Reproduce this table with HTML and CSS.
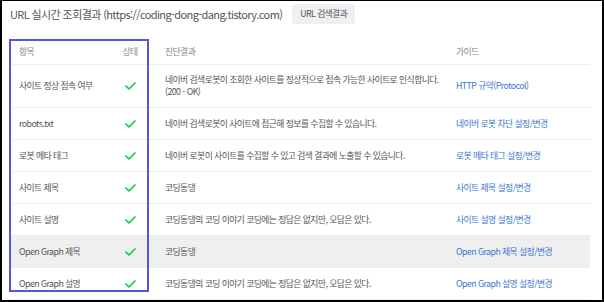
FILE: index.html
```html
<!DOCTYPE html>
<html lang="ko">
<head>
<meta charset="utf-8">
<link rel="stylesheet" href="styles.css">
</head>
<body>
<div class="frame">
  <div class="topbar">
    <span class="title">URL 실시간 조회결과 (https://coding-dong-dang.tistory.com)</span>
    <span class="btn">URL 검색결과</span>
  </div>
  <div class="tablewrap">
    <table class="result">
      <colgroup>
        <col class="c-item"><col class="c-state"><col class="c-desc"><col class="c-guide">
      </colgroup>
      <thead>
        <tr><th class="item">항목</th><th class="state">상태</th><th class="desc">진단결과</th><th class="guide">가이드</th></tr>
      </thead>
      <tbody>
        <tr class="tall"><td class="item">사이트 정상 접속 여부</td><td class="state"><svg class="chk" viewBox="0 0 11 8"><polyline points="1,4.2 4,7 10,1"/></svg></td><td class="desc">네이버 검색로봇이 조회한 사이트를 정상적으로 접속 가능한 사이트로 인식합니다.<br>(200 - OK)</td><td class="guide"><a>HTTP 규약(Protocol)</a></td></tr>
        <tr><td class="item">robots.txt</td><td class="state"><svg class="chk" viewBox="0 0 11 8"><polyline points="1,4.2 4,7 10,1"/></svg></td><td class="desc">네이버 검색로봇이 사이트에 접근해 정보를 수집할 수 있습니다.</td><td class="guide"><a>네이버 로봇 차단 설정/변경</a></td></tr>
        <tr><td class="item">로봇 메타 태그</td><td class="state"><svg class="chk" viewBox="0 0 11 8"><polyline points="1,4.2 4,7 10,1"/></svg></td><td class="desc">네이버 로봇이 사이트를 수집할 수 있고 검색 결과에 노출할 수 있습니다.</td><td class="guide"><a>로봇 메타 태그 설정/변경</a></td></tr>
        <tr><td class="item">사이트 제목</td><td class="state"><svg class="chk" viewBox="0 0 11 8"><polyline points="1,4.2 4,7 10,1"/></svg></td><td class="desc">코딩동댕</td><td class="guide"><a>사이트 제목 설정/변경</a></td></tr>
        <tr><td class="item">사이트 설명</td><td class="state"><svg class="chk" viewBox="0 0 11 8"><polyline points="1,4.2 4,7 10,1"/></svg></td><td class="desc">코딩동댕의 코딩 이야기 코딩에는 정답은 없지만, 오답은 있다.</td><td class="guide"><a>사이트 설명 설정/변경</a></td></tr>
        <tr class="hl"><td class="item">Open Graph 제목</td><td class="state"><svg class="chk" viewBox="0 0 11 8"><polyline points="1,4.2 4,7 10,1"/></svg></td><td class="desc">코딩동댕</td><td class="guide"><a>Open Graph 제목 설정/변경</a></td></tr>
        <tr><td class="item">Open Graph 설명</td><td class="state"><svg class="chk" viewBox="0 0 11 8"><polyline points="1,4.2 4,7 10,1"/></svg></td><td class="desc">코딩동댕의 코딩 이야기 코딩에는 정답은 없지만, 오답은 있다.</td><td class="guide"><a>Open Graph 설명 설정/변경</a></td></tr>
      </tbody>
    </table>
    <div class="mark"></div>
  </div>
</div>
</body>
</html>
```
FILE: styles.css
```css
* { box-sizing: border-box; }
html, body { margin: 0; padding: 0; background: #fff; }
body { font-family: "Noto Sans CJK KR", "Noto Sans", sans-serif; color: #555; }
.frame {
  width: 604px; height: 302px; overflow: hidden;
  border: 2px solid #000; border-top-width: 1px;
  padding: 3px 0 0 8px;
  position: relative;
}
.topbar { display: flex; align-items: center; height: 20px; gap: 10px; }
.title { font-size: 11px; color: #555; letter-spacing: -0.6px; }
.btn {
  background: #eef0f3; border-radius: 3px; color: #555;
  font-size: 8.8px; height: 20px; line-height: 20px; padding: 0 8px;
  letter-spacing: -0.6px;
}
.tablewrap { position: relative; margin-top: 15px; width: 580px; }
.result { width: 580px; border-collapse: collapse; table-layout: fixed; font-size: 8.8px; letter-spacing: -0.55px; }
.c-item { width: 102px; }
.c-state { width: 36px; }
.c-desc { width: 299px; }
.c-guide { width: 143px; }
.result th { font-weight: normal; color: #888; height: 25px; padding: 0; text-align: left; border-bottom: 1px solid #eee; }
.result td { padding: 10px 0 9px; line-height: 12px; border-bottom: 1px solid #eee; vertical-align: middle; white-space: nowrap; }
.result .item { padding-left: 9px; }
.result .state { text-align: center; }
.result .desc { padding-left: 17px; }
.result .guide { padding-left: 9px; }
.result tr.tall td { padding-top: 9px; }
.result tr.hl td { background: #efefef; }
.result a { color: #3a76d6; }
.chk { width: 11px; height: 8px; display: inline-block; vertical-align: middle; }
.chk polyline { fill: none; stroke: #22c45a; stroke-width: 1.7; stroke-linecap: round; stroke-linejoin: round; }
.mark {
  position: absolute; left: -1px; top: 0; width: 140px; height: 253px;
  border: 2px solid #5656dc;
}
```
